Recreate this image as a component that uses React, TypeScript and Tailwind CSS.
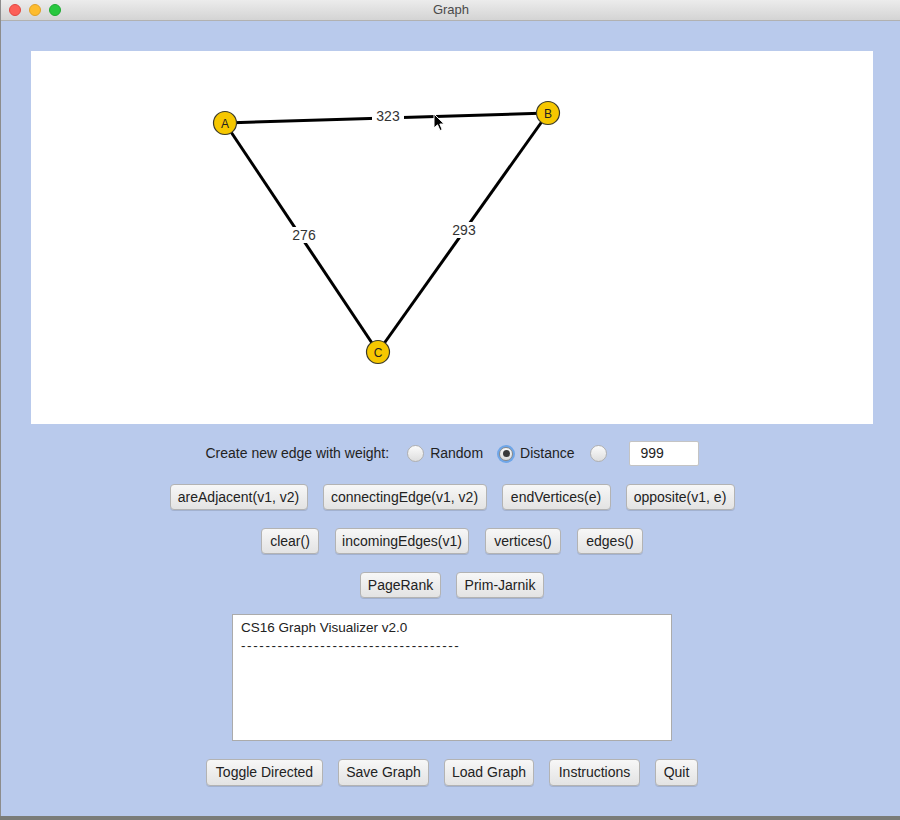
import React from "react";

const Btn = ({ label, w, h = "h-[26px]" }: { label: string; w: string; h?: string }) => (
  <div
    className={`${w} ${h} flex items-center justify-center rounded-[4px] border border-[#b3b3b3] bg-linear-to-b from-[#f7f7f7] to-[#e3e3e3] shadow-[0_1px_0_rgba(0,0,0,0.12)] text-[14px] text-[#222] whitespace-nowrap`}
  >
    {label}
  </div>
);

const Radio = ({ checked }: { checked?: boolean }) =>
  checked ? (
    <div className="w-[18px] h-[18px] rounded-full bg-[#6fa6e8] p-[2px] flex items-center justify-center">
      <div className="w-full h-full rounded-full border border-[#8a8a8a] bg-linear-to-b from-[#fafafa] to-[#dcdcdc] flex items-center justify-center">
        <div className="w-[7px] h-[7px] rounded-full bg-[#3a3a3a]" />
      </div>
    </div>
  ) : (
    <div className="w-[17px] h-[17px] rounded-full border border-[#b0b0b0] bg-linear-to-b from-[#fbfbfb] to-[#dedede]" />
  );

const Node = ({ x, y, l }: { x: number; y: number; l: string }) => (
  <g>
    <circle cx={x} cy={y} r={11.5} fill="#f6c700" stroke="#3a3a2a" strokeWidth={1.2} />
    <text
      x={x}
      y={y + 4.5}
      textAnchor="middle"
      fontSize={12}
      fontFamily="Liberation Sans, Arial, sans-serif"
      fill="#222"
    >
      {l}
    </text>
  </g>
);

const Label = ({ x, y, t }: { x: number; y: number; t: string }) => (
  <g>
    <rect x={x - 16} y={y - 8} width={32} height={16} fill="#fff" />
    <text
      x={x}
      y={y + 5}
      textAnchor="middle"
      fontSize={14}
      fontFamily="Liberation Sans, Arial, sans-serif"
      fill="#333"
    >
      {t}
    </text>
  </g>
);

export default function App() {
  const A = { x: 194, y: 72 };
  const B = { x: 517, y: 62 };
  const C = { x: 347, y: 301 };
  return (
    <div className="w-[900px] h-[820px] overflow-hidden bg-[#7a7c78] font-['Liberation_Sans',Arial,sans-serif]">
      <div className="w-[903px] h-[816px] flex flex-col border-l border-[#8c8c8c]">
        {/* title bar */}
        <div className="h-[21px] shrink-0 flex items-center px-[8px] bg-linear-to-b from-[#ececec] to-[#d4d4d4] border-b border-[#b1b1b1] relative">
          <div className="flex gap-[8px]">
            <div className="w-[12px] h-[12px] rounded-full bg-[#fc5f57] border border-[#e2463f]" />
            <div className="w-[12px] h-[12px] rounded-full bg-[#fdbc2e] border border-[#e0a126]" />
            <div className="w-[12px] h-[12px] rounded-full bg-[#28c840] border border-[#1eaa32]" />
          </div>
          <div className="flex-1 text-center text-[13px] text-[#4a4a4a] pr-[54px]">Graph</div>
        </div>

        {/* body */}
        <div className="flex-1 bg-[#b9caec] flex flex-col items-center">
          {/* canvas */}
          <div className="mt-[30px] w-[842px] h-[373px] bg-white relative">
            <svg className="absolute inset-0 w-full h-full" viewBox="0 0 842 373">
              <line x1={A.x} y1={A.y} x2={B.x} y2={B.y} stroke="#000" strokeWidth={3} />
              <line x1={A.x} y1={A.y} x2={C.x} y2={C.y} stroke="#000" strokeWidth={3} />
              <line x1={B.x} y1={B.y} x2={C.x} y2={C.y} stroke="#000" strokeWidth={3} />
              <Label x={357} y={65} t="323" />
              <Label x={273} y={184} t="276" />
              <Label x={433} y={179} t="293" />
              <Node x={A.x} y={A.y} l="A" />
              <Node x={B.x} y={B.y} l="B" />
              <Node x={C.x} y={C.y} l="C" />
              <g transform="translate(403,63)">
                <path
                  d="M0 0 L0 14 L3.5 10.8 L6 16.5 L8.2 15.6 L5.8 10 L10.2 10 Z"
                  fill="#000"
                  stroke="#fff"
                  strokeWidth={1}
                  strokeLinejoin="round"
                />
              </g>
            </svg>
          </div>

          {/* weight row */}
          <div className="mt-[17px] h-[25px] flex items-center text-[14px] text-[#222]">
            <span>Create new edge with weight:</span>
            <div className="ml-[18px]">
              <Radio />
            </div>
            <span className="ml-[6px]">Random</span>
            <div className="ml-[14px]">
              <Radio checked />
            </div>
            <span className="ml-[5px]">Distance</span>
            <div className="ml-[15px]">
              <Radio />
            </div>
            <div className="ml-[22px] w-[70px] h-[25px] bg-white border border-[#c4c4c4] rounded-[2px] flex items-center pl-[11px]">
              999
            </div>
          </div>

          {/* row 1 */}
          <div className="mt-[18px] flex gap-[15px]">
            <Btn label="areAdjacent(v1, v2)" w="w-[138px]" />
            <Btn label="connectingEdge(v1, v2)" w="w-[164px]" />
            <Btn label="endVertices(e)" w="w-[109px]" />
            <Btn label="opposite(v1, e)" w="w-[109px]" />
          </div>

          {/* row 2 */}
          <div className="mt-[18px] flex gap-[16px]">
            <Btn label="clear()" w="w-[58px]" />
            <Btn label="incomingEdges(v1)" w="w-[134px]" />
            <Btn label="vertices()" w="w-[76px]" />
            <Btn label="edges()" w="w-[66px]" />
          </div>

          {/* row 3 */}
          <div className="mt-[18px] flex gap-[15px]">
            <Btn label="PageRank" w="w-[81px]" />
            <Btn label="Prim-Jarnik" w="w-[88px]" />
          </div>

          {/* text area */}
          <div className="mt-[16px] w-[440px] h-[127px] bg-white border border-[#ababab] px-[8px] pt-[4px] text-[13.5px] leading-[18px] text-[#222]">
            <div>CS16 Graph Visualizer v2.0</div>
            <div className="tracking-[1.6px] whitespace-nowrap">------------------------------------</div>
          </div>

          {/* bottom row */}
          <div className="mt-[18px] flex gap-[15px]">
            <Btn label="Toggle Directed" w="w-[117px]" h="h-[27px]" />
            <Btn label="Save Graph" w="w-[91px]" h="h-[27px]" />
            <Btn label="Load Graph" w="w-[90px]" h="h-[27px]" />
            <Btn label="Instructions" w="w-[91px]" h="h-[27px]" />
            <Btn label="Quit" w="w-[43px]" h="h-[27px]" />
          </div>
        </div>
      </div>
    </div>
  );
}
